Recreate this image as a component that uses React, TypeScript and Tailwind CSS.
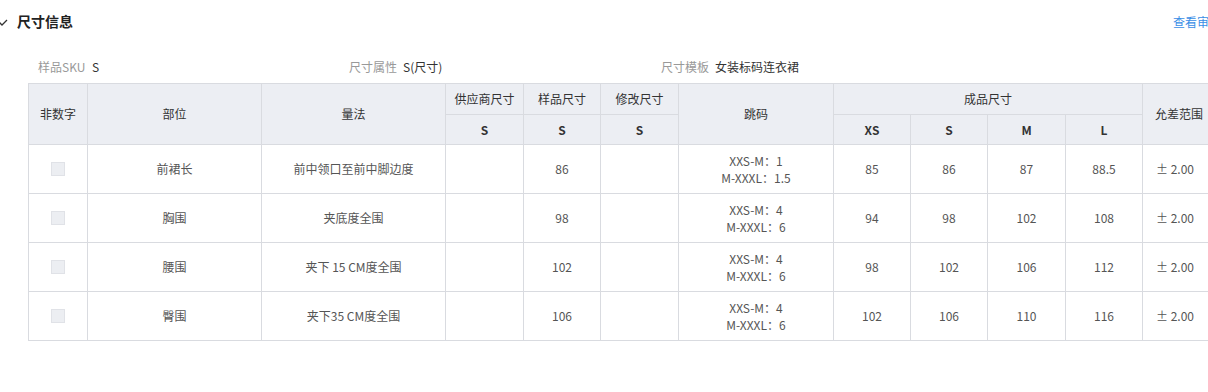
import React from "react";

const widths = [59, 174, 184, 78, 77, 78, 155, 77, 77, 78, 77, 90];

const rows = [
  { part: "前裙长", method: "前中领口至前中脚边度", sample: "86", jump: ["XXS-M：1", "M-XXXL：1.5"], sizes: ["85", "86", "87", "88.5"] },
  { part: "胸围", method: "夹底度全围", sample: "98", jump: ["XXS-M：4", "M-XXXL：6"], sizes: ["94", "98", "102", "108"] },
  { part: "腰围", method: "夹下 15 CM度全围", sample: "102", jump: ["XXS-M：4", "M-XXXL：6"], sizes: ["98", "102", "106", "112"] },
  { part: "臀围", method: "夹下35 CM度全围", sample: "106", jump: ["XXS-M：4", "M-XXXL：6"], sizes: ["102", "106", "110", "116"] },
];

const thBase = "border border-[#d9dbe0] bg-[#eceef3] text-[#333] text-[12px] text-center p-0";
const th = thBase + " font-normal";
const thB = thBase + " font-bold";
const td = "border border-[#d9dbe0] text-[#555] text-[12px] text-center p-0 h-[49px]";

export default function App() {
  return (
    <div
      className="w-[1208px] h-[392px] overflow-hidden bg-white relative"
      style={{ fontFamily: '"Noto Sans CJK SC", "Microsoft YaHei", sans-serif' }}
    >
      <div className="w-[1260px]">
        <div className="flex items-center h-[42px]">
          <svg width="12" height="10" viewBox="0 0 12 10" className="ml-[-4px] mt-[1px]">
            <polyline points="1,3 6,8 11,3" fill="none" stroke="#333" strokeWidth="1.3" />
          </svg>
          <span className="ml-[9px] text-[14px] font-bold text-[#222] leading-none">尺寸信息</span>
          <span className="ml-auto mr-[15px] text-[12px] text-[#3a8ee6] leading-none mt-[1px]">查看审核记录</span>
        </div>
        <div className="flex pl-[38px] h-[16px] items-center mt-[17px] text-[12px] leading-none">
          <div className="w-[311px] flex">
            <span className="text-[#999] w-[54px]">样品SKU</span>
            <span className="text-[#333]">S</span>
          </div>
          <div className="w-[312px] flex">
            <span className="text-[#999] w-[54px]">尺寸属性</span>
            <span className="text-[#333]">S(尺寸)</span>
          </div>
          <div className="flex">
            <span className="text-[#999] w-[54px]">尺寸模板</span>
            <span className="text-[#333]">女装标码连衣裙</span>
          </div>
        </div>
        <div className="pl-[28px] mt-[8px]">
          <table className="border-collapse table-fixed" style={{ width: widths.reduce((a, b) => a + b, 0) }}>
            <colgroup>
              {widths.map((w, i) => (
                <col key={i} style={{ width: w }} />
              ))}
            </colgroup>
            <thead>
              <tr className="h-[31px]">
                <th rowSpan={2} className={th}>非数字</th>
                <th rowSpan={2} className={th}>部位</th>
                <th rowSpan={2} className={th}>量法</th>
                <th className={th}>供应商尺寸</th>
                <th className={th}>样品尺寸</th>
                <th className={th}>修改尺寸</th>
                <th rowSpan={2} className={th}>跳码</th>
                <th colSpan={4} className={th}>成品尺寸</th>
                <th rowSpan={2} className={th + " text-left pl-[12px]"}>允差范围</th>
              </tr>
              <tr className="h-[30px]">
                <th className={thB}>S</th>
                <th className={thB}>S</th>
                <th className={thB}>S</th>
                <th className={thB}>XS</th>
                <th className={thB}>S</th>
                <th className={thB}>M</th>
                <th className={thB}>L</th>
              </tr>
            </thead>
            <tbody>
              {rows.map((r, i) => (
                <tr key={i}>
                  <td className={td}>
                    <div className="mx-auto w-[14px] h-[14px] bg-[#eceef2] border border-[#e0e2e7]" />
                  </td>
                  <td className={td}>{r.part}</td>
                  <td className={td}>{r.method}</td>
                  <td className={td}></td>
                  <td className={td}>{r.sample}</td>
                  <td className={td}></td>
                  <td className={td + " leading-[17px]"}>
                    <div>{r.jump[0]}</div>
                    <div>{r.jump[1]}</div>
                  </td>
                  {r.sizes.map((s, j) => (
                    <td key={j} className={td}>{s}</td>
                  ))}
                  <td className={td + " text-left pl-[13px]"}>± 2.00</td>
                </tr>
              ))}
            </tbody>
          </table>
        </div>
      </div>
    </div>
  );
}
